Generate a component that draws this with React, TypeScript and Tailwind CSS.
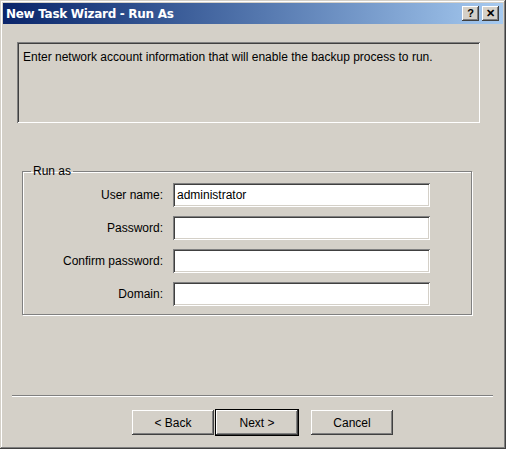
const raised =
  'bg-[#d4d0c8] shadow-[inset_-1px_-1px_0_#404040,inset_1px_1px_0_#ffffff,inset_-2px_-2px_0_#808080,inset_2px_2px_0_#d4d0c8]'

const sunken =
  'bg-white shadow-[inset_1px_1px_0_#808080,inset_-1px_-1px_0_#ffffff,inset_2px_2px_0_#404040,inset_-2px_-2px_0_#d4d0c8]'

function TitleButton({ children }: { children: React.ReactNode }) {
  return (
    <div className={`${raised} w-[17px] h-[15px] flex items-center justify-center text-[11px] font-bold leading-none text-black`}>
      {children}
    </div>
  )
}

function Field({ label, value }: { label: string; value?: string }) {
  return (
    <div className="flex items-center">
      <div className="w-[138px] text-right pr-[10px]">{label}</div>
      <div className={`${sunken} w-[257px] h-[24px] flex items-center px-[4px]`}>{value}</div>
    </div>
  )
}

function Button({ label, isDefault }: { label: string; isDefault?: boolean }) {
  return (
    <div className={isDefault ? 'border border-black' : 'border border-transparent'}>
      <div className={`${raised} w-[82px] h-[25px] flex items-center justify-center`}>{label}</div>
    </div>
  )
}

export default function App() {
  return (
    <div className="w-[511px] h-[451px] bg-white font-['Liberation_Sans',Arial,sans-serif] text-[12px] text-black">
      <div className="w-[506px] h-[449px] bg-[#d4d0c8] shadow-[inset_-1px_-1px_0_#404040,inset_1px_1px_0_#d4d0c8,inset_-2px_-2px_0_#808080,inset_2px_2px_0_#ffffff] p-[3px] flex flex-col">
        {/* title bar */}
        <div className="h-[21px] bg-gradient-to-r from-[#0a246a] to-[#a6caf0] flex items-center justify-between pl-[3px] pr-[4px]">
          <span className="text-white font-bold text-[12px] font-['DejaVu_Sans',sans-serif] tracking-[-0.3px]">New Task Wizard - Run As</span>
          <div className="flex gap-[3px]">
            <TitleButton>?</TitleButton>
            <TitleButton>✕</TitleButton>
          </div>
        </div>

        {/* info panel */}
        <div className="mt-[18px] ml-[14px] w-[463px] h-[81px] shadow-[inset_1px_1px_0_#808080,inset_-1px_-1px_0_#ffffff,inset_2px_2px_0_#404040] px-[6px] pt-[6px]">
          Enter network account information that will enable the backup process to run.
        </div>

        {/* run as group */}
        <fieldset className="mt-[42px] ml-[19px] w-[450px] h-[150px] border border-[#808080] shadow-[inset_1px_1px_0_#ffffff,1px_1px_0_#ffffff] px-0 pt-[6px]">
          <legend className="ml-[8px] px-[2px] leading-none">Run as</legend>
          <div className="flex flex-col gap-[9px] pl-[12px]">
            <Field label="User name:" value="administrator" />
            <Field label="Password:" />
            <Field label="Confirm password:" />
            <Field label="Domain:" />
          </div>
        </fieldset>

        {/* separator */}
        <div className="mt-[80px] ml-[9px] w-[481px] h-[2px] border-t border-[#808080] border-b border-b-white" />

        {/* buttons */}
        <div className="mt-[12px] flex pl-[128px]">
          <Button label="< Back" />
          <Button label="Next >" isDefault />
          <div className="ml-[11px]">
            <Button label="Cancel" />
          </div>
        </div>
      </div>
    </div>
  )
}
